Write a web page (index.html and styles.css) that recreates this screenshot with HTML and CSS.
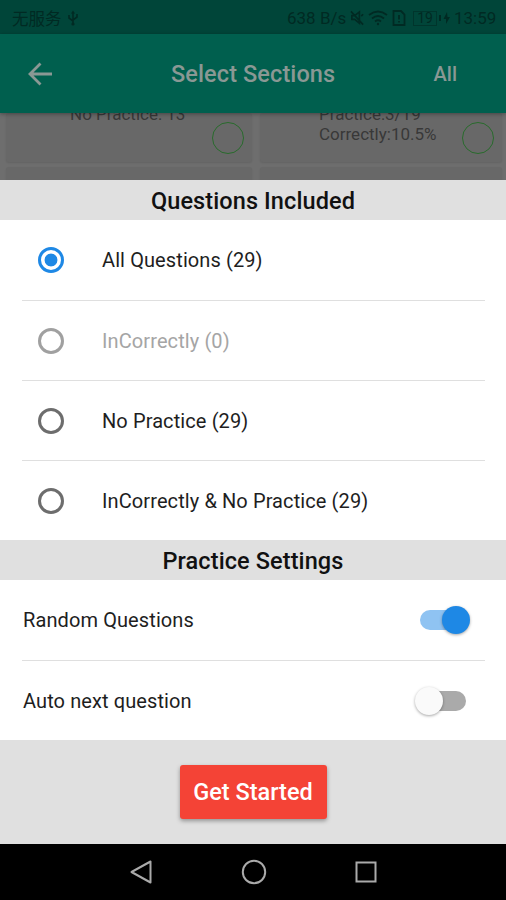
FILE: index.html
```
<!DOCTYPE html>
<html lang="en">
<head>
  <meta charset="UTF-8" />
  <meta name="viewport" content="width=device-width, initial-scale=1.0" />
  <title>Select Sections</title>
  <link rel="stylesheet" href="styles.css">
</head>
<body>
  <div class="status-bar">
    <span class="carrier">无服务</span>
    <svg class="usb" width="12" height="16" viewBox="0 0 12 16" fill="none" stroke="currentColor" stroke-width="1.6">
      <path d="M6 14V2M2 5v3l4 3M10 4v3L6 10" />
      <path d="M4 3.5L6 .5l2 3z" fill="currentColor" stroke="none" />
      <circle cx="6" cy="14" r="1.6" fill="currentColor" stroke="none" />
    </svg>
    <span class="speed">638 B/s</span>
    <svg class="mute" width="15" height="16" viewBox="0 0 16 16" fill="none" stroke="currentColor" stroke-width="1.8">
      <path d="M2 5.5h3l5-4v12l-5-4H2zM1 1l13 14M12 6l2-2" />
    </svg>
    <svg class="wifi" width="20" height="16" viewBox="0 0 20 16" fill="none" stroke="currentColor" stroke-width="1.8">
      <path d="M1 5q9-7 18 0M4 8.5q6-5 12 0M7 11.5q3-2.500 6 0" />
      <circle cx="10" cy="14" r="1.2" fill="currentColor" stroke="none" />
    </svg>
    <svg class="sim" width="14" height="16" viewBox="0 0 14 16" fill="none" stroke="currentColor" stroke-width="1.8">
      <path d="M1.500 1h7.500l3.500 3.500V15h-11zM7 5v4.500M7 11v1.600" />
    </svg>
    <span class="battery">19</span>
    <svg class="charge" width="12" height="14" viewBox="0 0 12 14" fill="currentColor">
      <path d="M0 4h2v6H0zM8 1L4.500 8h2.500v5l4-7H8.500z" />
    </svg>
    <span class="clock">13:59</span>
  </div>

  <div class="app-bar">
    <svg class="back" width="24" height="24" viewBox="0 0 24 24" fill="none" stroke="currentColor" stroke-width="2.800">
      <path d="M24 12H2M12.500 1.500L2 12l10.500 10.500" />
    </svg>
    <h1 class="title">Select Sections</h1>
    <span class="all">All</span>
  </div>

  <div class="sections">
    <div class="section-card">
      <p class="stats stats-left">No Practice: 13</p>
      <span class="ring"></span>
    </div>
    <div class="section-card">
      <p class="stats stats-right">Practice:3/19<br>Correctly:10.5%</p>
      <span class="ring"></span>
    </div>
    <div class="section-card next"></div>
    <div class="section-card next"></div>
  </div>

  <div class="sheet">
    <h2 class="heading">Questions Included</h2>
    <div class="options">
      <div class="row"><span class="radio checked"></span><span class="label">All Questions (29)</span></div>
      <div class="row disabled"><span class="radio"></span><span class="label">InCorrectly (0)</span></div>
      <div class="row"><span class="radio"></span><span class="label">No Practice (29)</span></div>
      <div class="row"><span class="radio"></span><span class="label">InCorrectly &amp; No Practice (29)</span></div>
    </div>
    <h2 class="heading">Practice Settings</h2>
    <div class="options">
      <div class="row setting"><span class="label">Random Questions</span><span class="switch on"></span></div>
      <div class="row setting"><span class="label">Auto next question</span><span class="switch"></span></div>
    </div>
    <div class="footer">
      <button class="start">Get Started</button>
    </div>
  </div>

  <div class="nav-bar">
    <svg width="24" height="26" viewBox="0 0 24 26" fill="none" stroke="currentColor" stroke-width="2">
      <path d="M21.500 2.500v21L2.500 13z" stroke-linejoin="round" />
    </svg>
    <svg width="26" height="26" viewBox="0 0 26 26" fill="none" stroke="currentColor" stroke-width="2">
      <circle cx="13" cy="13" r="11.200" />
    </svg>
    <svg width="24" height="26" viewBox="0 0 24 26" fill="none" stroke="currentColor" stroke-width="2">
      <rect x="2.500" y="3.500" width="19" height="19" />
    </svg>
  </div>
</body>
</html>
```
FILE: styles.css
```
* {
  box-sizing: border-box;
}

body {
  margin: 0;
  height: 900px;
  overflow: hidden;
  font-family: Roboto, "Noto Sans CJK SC", sans-serif;
  color: #1e1e1e;
  background-color: #6e6e6e;
}

h1, h2, p {
  margin: 0;
}

.status-bar {
  height: 34px;
  padding: 2px 10px 0 12px;
  display: flex;
  align-items: center;
  background-color: #004539;
  color: #002a23;
  font-size: 17px;
  white-space: nowrap;
}

.carrier {
  width: 50px;
  font-size: 16.5px;
}

.usb {
  margin-left: 5px;
}

.speed {
  margin-left: auto;
  width: 61px;
}

.mute {
  margin-left: 2px;
}

.wifi {
  margin-left: 3px;
}

.sim {
  margin-left: 4px;
}

.battery {
  margin-left: 7px;
  width: 24px;
  height: 15px;
  border: 1px solid #00352c;
  font-size: 14px;
  line-height: 13px;
  text-align: center;
}

.charge {
  margin-left: 2px;
}

.clock {
  margin-left: 3px;
  width: 42px;
}

.app-bar {
  position: relative;
  height: 79px;
  display: flex;
  align-items: center;
  padding: 0 49px 0 28px;
  background-color: #005f4e;
  color: #8a9894;
  box-shadow: 0 1px 4px rgba(0, 0, 0, 0.35);
}

.title {
  margin-left: 119px;
  font-size: 23.5px;
  font-weight: 500;
  letter-spacing: 0.1px;
}

.all {
  margin-left: auto;
  font-size: 20px;
  font-weight: 500;
}

.sections {
  height: 67px;
  overflow: hidden;
  display: grid;
  grid-template-columns: 246px 242px;
  grid-template-rows: 49px 30px;
  column-gap: 8px;
  row-gap: 5px;
  padding-left: 6px;
}

.section-card {
  display: flex;
  justify-content: space-between;
  background-color: #686868;
  border-radius: 3px;
  padding-right: 8px;
  box-shadow: 0 1px 2px rgba(0, 0, 0, 0.1);
}

.stats {
  margin-top: -9px;
  font-size: 17px;
  line-height: 20px;
  color: #383838;
}

.stats-left {
  margin-left: 64px;
}

.stats-right {
  margin-left: 59px;
}

.ring {
  width: 32px;
  height: 32px;
  margin-top: 9px;
  border: 1.5px solid #286b2c;
  border-radius: 50%;
}

.sheet {
  position: relative;
  height: 664px;
  background-color: #fff;
}

.heading {
  height: 40px;
  line-height: 42px;
  text-align: center;
  font-size: 23.5px;
  font-weight: 500;
  letter-spacing: 0.1px;
  color: #111;
  background-color: #e0e0e0;
}

.options {
  padding: 0 21px 0 22px;
}

.row {
  height: 80px;
  display: flex;
  align-items: center;
  padding-left: 16px;
}

.row + .row {
  border-top: 1px solid #dfdfdf;
}

.label {
  font-size: 20px;
  letter-spacing: 0.1px;
}

.radio {
  width: 26px;
  height: 26px;
  margin-right: 38px;
  border: 3px solid #6d6d6d;
  border-radius: 50%;
}

.radio.checked {
  border-color: #1e88e5;
  background: radial-gradient(circle, #1e88e5 6px, transparent 6.8px);
}

.disabled {
  color: #a5a5a5;
}

.disabled .radio {
  border-color: #a0a0a0;
}

.setting {
  justify-content: space-between;
  padding: 0 19px 0 1px;
}

.switch {
  position: relative;
  width: 46px;
  height: 20px;
  border-radius: 10px;
  background-color: #aaa;
}

.switch::after {
  content: "";
  position: absolute;
  top: -4px;
  left: -5px;
  width: 28px;
  height: 28px;
  border-radius: 50%;
  background-color: #fafafa;
  box-shadow: 0 1px 3px rgba(0, 0, 0, 0.35);
}

.switch.on {
  background-color: #8fc3f2;
}

.switch.on::after {
  left: 22px;
  background-color: #1e88e5;
}

.footer {
  height: 104px;
  display: flex;
  justify-content: center;
  align-items: center;
  background-color: #e0e0e0;
}

.start {
  width: 147px;
  height: 54px;
  padding: 0;
  border: none;
  border-radius: 3px;
  background-color: #f44336;
  color: #fff;
  font-family: inherit;
  font-size: 23.5px;
  font-weight: 500;
  box-shadow: 0 2px 4px rgba(0, 0, 0, 0.35);
}

.nav-bar {
  height: 56px;
  display: flex;
  justify-content: space-between;
  align-items: center;
  padding: 0 128px 0 129px;
  background-color: #000;
  color: #aaa;
}
```
